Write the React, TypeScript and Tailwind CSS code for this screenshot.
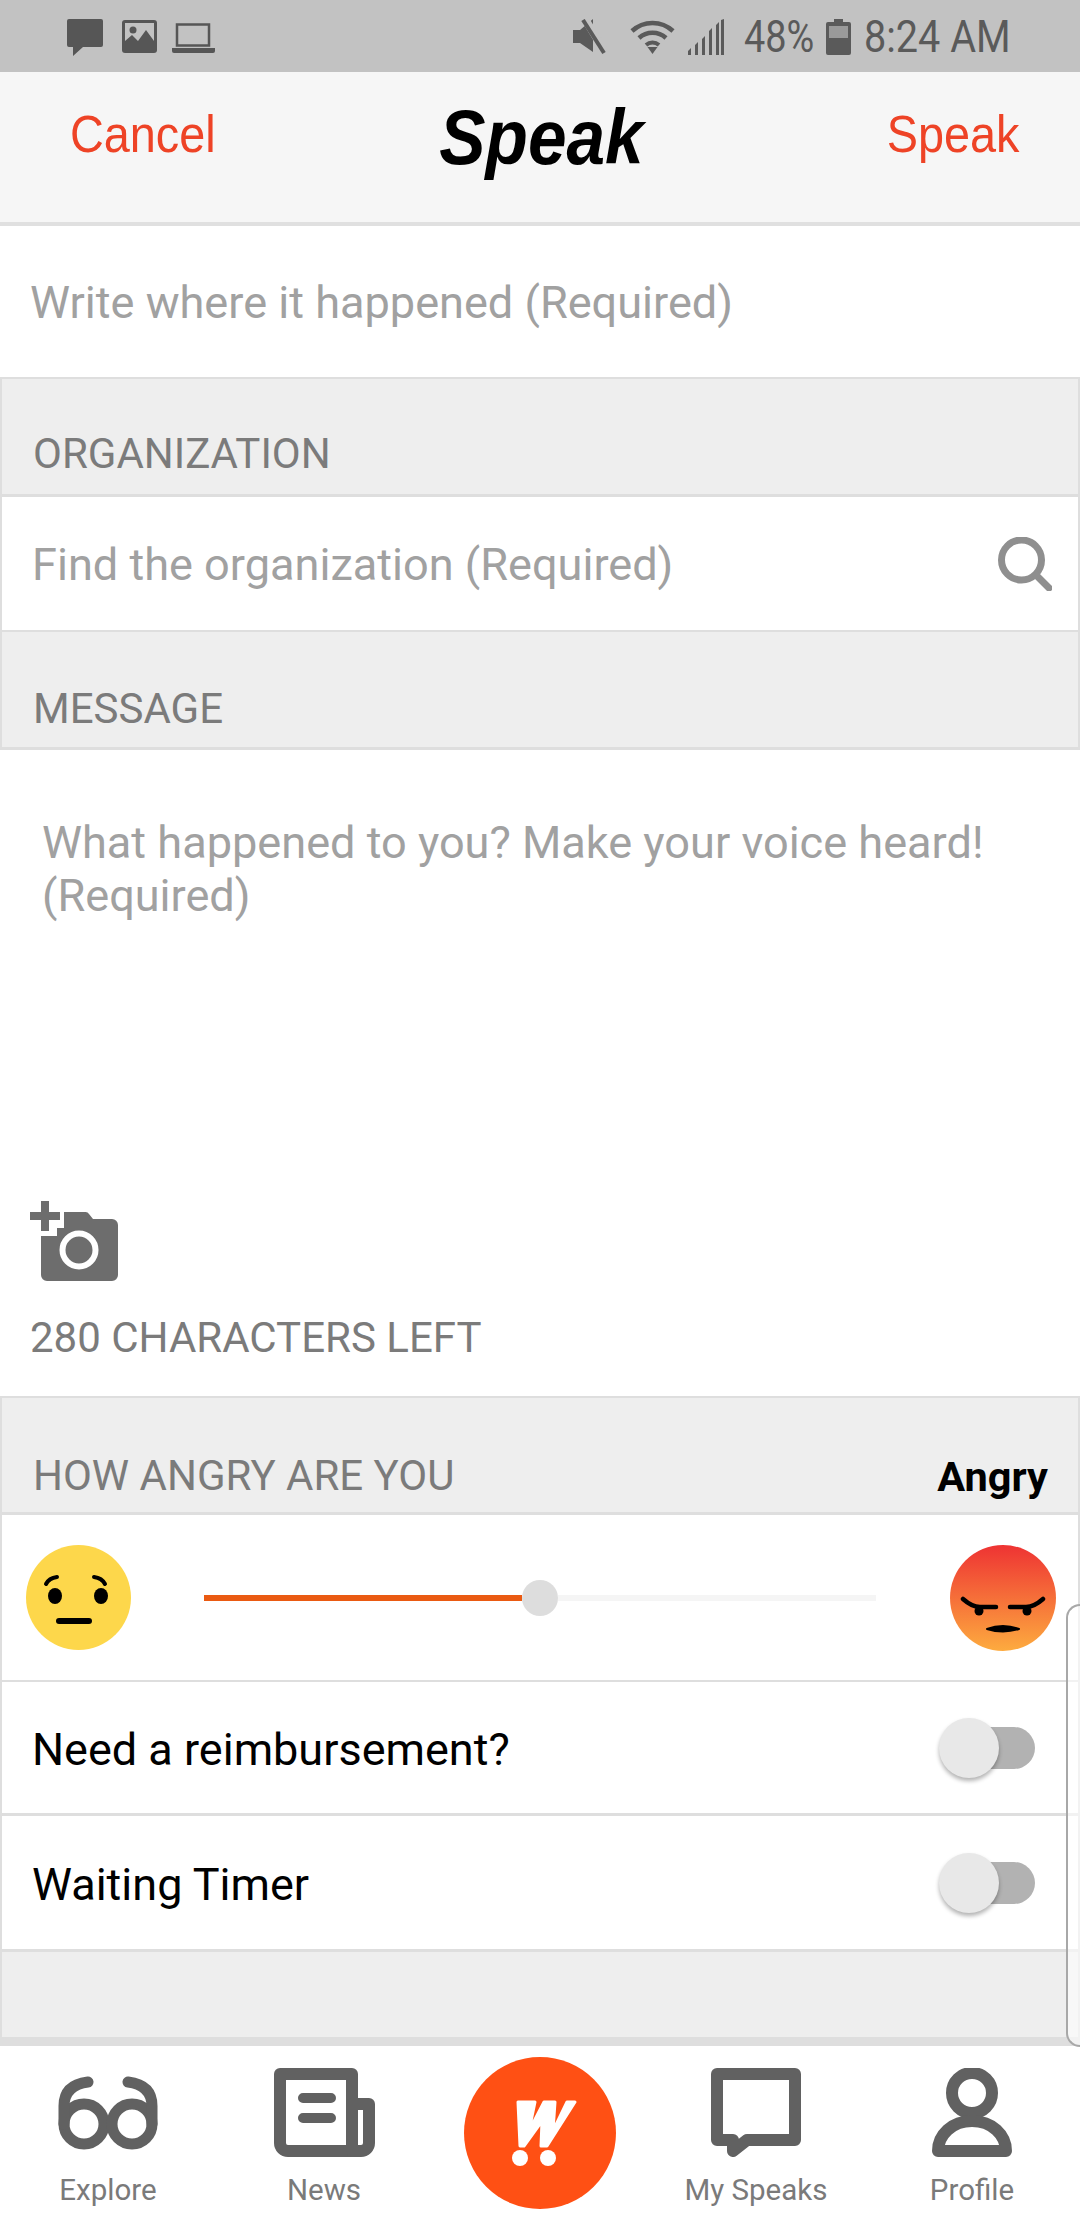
const sans = "font-['Roboto','Noto_Sans',sans-serif]";

function SectionHead({ label, right, pb }: { label: string; right?: string; pb: string }) {
  return (
    <div className={`flex h-full items-end justify-between border-x-2 border-t-2 border-b-[3px] border-[#dedede] bg-[#eeeeee] pr-[30px] pl-[31px] ${pb}`}>
      <span className="text-[42px] leading-[48px] text-[#7b7b7b]">{label}</span>
      {right && <span className="mb-[-1px] text-[41.5px] leading-[48px] font-bold text-black">{right}</span>}
    </div>
  );
}

function ToggleRow({ label, h }: { label: string; h: string }) {
  return (
    <div className={`flex items-center justify-between border-x-2 border-b-[3px] border-[#dedede] bg-white pr-[43px] pl-[30px] ${h}`}>
      <span className="pt-[4px] text-[45px] text-black">{label}</span>
      <div className="relative h-[42px] w-[96px]">
        <div className="absolute top-0 right-0 h-[42px] w-[84px] rounded-full bg-[#b2b2b2]" />
        <div className="absolute top-[-9px] left-0 h-[60px] w-[60px] rounded-full bg-[#e8e8e8] shadow-[0_3px_4px_rgba(0,0,0,0.3)]" />
      </div>
    </div>
  );
}

function StatusIcons() {
  return (
    <div className="flex items-start pt-[19px] text-[#565656]">
      <svg width="36" height="37" viewBox="0 0 36 37" className="mr-[19px]">
        <path d="M2 0h32a2 2 0 0 1 2 2v24a2 2 0 0 1-2 2H16L6 37v-9H2a2 2 0 0 1-2-2V2a2 2 0 0 1 2-2z" fill="currentColor" />
      </svg>
      <svg width="35" height="33" viewBox="0 0 35 33" className="mt-[1px] mr-[15px]">
        <rect width="35" height="33" rx="3" fill="currentColor" />
        <rect x="3" y="3" width="29" height="27" fill="#c2c2c2" />
        <path d="M3 30V21l7-6 6 6 8-11 8 11v9z" fill="currentColor" />
        <circle cx="11" cy="10" r="3.5" fill="currentColor" />
      </svg>
      <svg width="43" height="30" viewBox="0 0 43 30" className="mt-[4px]">
        <rect x="5" y="1.5" width="32" height="21" fill="none" stroke="currentColor" strokeWidth="2.5" />
        <path d="M0 25h43v3a2 2 0 0 1-2 2H2a2 2 0 0 1-2-2z" fill="currentColor" />
      </svg>
    </div>
  );
}

function StatusRight() {
  return (
    <div className="flex items-start pt-[19px] text-[#5a5a5a]">
      <svg width="34" height="36" viewBox="0 0 34 36" className="mr-[23px]">
        <path d="M0 11h7L20 0v33L7 24H0z" fill="currentColor" />
        <path d="M12 0l22 36" stroke="#c2c2c2" strokeWidth="8" />
        <path d="M10 1l21 33" stroke="currentColor" strokeWidth="4" />
      </svg>
      <svg width="45" height="35" viewBox="0 0 45 35" className="mr-[12px]">
        <path d="M2 12a30 30 0 0 1 41 0" fill="none" stroke="currentColor" strokeWidth="4.5" />
        <path d="M9 19a20 20 0 0 1 27 0" fill="none" stroke="currentColor" strokeWidth="4.5" />
        <path d="M16 26a10 10 0 0 1 13 0" fill="none" stroke="currentColor" strokeWidth="4" />
        <path d="M22.5 35l-5-7h10z" fill="currentColor" />
      </svg>
      <svg width="37" height="36" viewBox="0 0 37 36" className="mr-[20px]">
        <path d="M1 36v-4l3-3v7zM8 36V26l3-3v13zM15 36V20l3-3v19zM22 36V12l3-3v27zM29 36V6l3-3v33zM34 36V1l3-1v36z" fill="currentColor" />
      </svg>
      <span className="mt-[-2px] mr-[12px] w-[70px] origin-left scale-x-[0.86] text-[44px] leading-[40px] whitespace-nowrap">48%</span>
      <svg width="25" height="36" viewBox="0 0 25 36" className="mr-[13px]">
        <path d="M8 0h9v3h6a2 2 0 0 1 2 2v29a2 2 0 0 1-2 2H2a2 2 0 0 1-2-2V5a2 2 0 0 1 2-2h6z" fill="currentColor" />
        <rect x="3" y="7" width="19" height="12" fill="#9a9a9a" />
      </svg>
      <span className="mt-[-2px] w-[145px] origin-left scale-x-[0.9] text-[44px] leading-[40px] whitespace-nowrap">8:24 AM</span>
    </div>
  );
}

function NavItem({ label, children }: { label: string; children: React.ReactNode }) {
  return (
    <div className="flex flex-col items-center pt-[22px]">
      <div className="flex h-[89px] items-center justify-center text-[#616161]">{children}</div>
      <span className="mt-[14px] text-[29.5px] leading-[38px] text-[#7a7a7a]">{label}</span>
    </div>
  );
}

export default function App() {
  return (
    <div className={`relative h-[2220px] w-[1080px] overflow-hidden bg-white ${sans}`}>
      <div className="flex h-[72px] items-start justify-between bg-[#c2c2c2] pr-[71px] pl-[67px]">
        <StatusIcons />
        <StatusRight />
      </div>

      <div className="flex h-[154px] items-start justify-between border-b-4 border-[#e0e0e0] bg-[#f6f6f6] pt-[27px] pr-[61px] pl-[70px] font-['Liberation_Sans',sans-serif]">
        <span className="origin-left scale-x-90 text-[52px] leading-[70px] text-[#ee4326]">Cancel</span>
        <span className="mr-[20px] origin-center scale-x-90 text-[77px] leading-[76px] font-bold italic text-black">Speak</span>
        <span className="origin-right scale-x-90 text-[52px] leading-[70px] text-[#ee4326]">Speak</span>
      </div>

      <div className="flex h-[151px] items-center bg-white pt-[2px] pl-[30px]">
        <span className="text-[45.1px] text-[#a1a1a1]">Write where it happened (Required)</span>
      </div>

      <div className="h-[120px]">
        <SectionHead label="ORGANIZATION" pb="pb-[16px]" />
      </div>

      <div className="flex h-[133px] items-center justify-between border-x-2 border-[#dedede] bg-white pr-[26px] pl-[30px]">
        <span className="pt-[2px] text-[45.1px] text-[#a1a1a1]">Find the organization (Required)</span>
        <svg width="54" height="54" viewBox="0 0 54 54" fill="none" stroke="#8f8f8f" strokeLinecap="round">
          <circle cx="23.5" cy="23" r="20" strokeWidth="7" />
          <path d="M38 38l13 13" strokeWidth="7" />
        </svg>
      </div>

      <div className="h-[120px]">
        <SectionHead label="MESSAGE" pb="pb-[14px]" />
      </div>

      <div className="flex h-[646px] flex-col bg-white pt-[66px] pl-[42px]">
        <p className="w-[1010px] text-[45.1px] leading-[53px] text-[#a1a1a1]">
          What happened to you? Make your voice heard! (Required)
        </p>
        <svg width="88" height="80" viewBox="0 0 88 80" className="mt-[279px] ml-[-12px] shrink-0" fill="#6d6d6d">
          <path d="M34 11h21a4 4 0 0 1 4 2l4 5h19a6 6 0 0 1 6 6v50a6 6 0 0 1-6 6H17a6 6 0 0 1-6-6V35h16v-8h7z" />
          <path d="M11 0h8v11h11v8H19v11h-8V19H0v-8h11z" />
          <circle cx="49" cy="49" r="16.5" fill="none" stroke="#fff" strokeWidth="6" />
        </svg>
        <span className="mt-[33px] ml-[-12px] text-[42px] leading-[48px] text-[#7b7b7b]">280 CHARACTERS LEFT</span>
      </div>

      <div className="h-[119px]">
        <SectionHead label="HOW ANGRY ARE YOU" right="Angry" pb="pb-[12px]" />
      </div>

      <div className="flex h-[167px] items-center border-x-2 border-b-2 border-[#dedede] bg-white pr-[22px] pl-[24px]">
        <svg width="105" height="105" viewBox="0 0 105 105" className="shrink-0">
          <circle cx="52.5" cy="52.5" r="52.5" fill="#fdd74b" />
          <ellipse cx="29" cy="51" rx="7" ry="8" fill="#000" />
          <ellipse cx="75" cy="51" rx="7" ry="8" fill="#000" />
          <path d="M20 39q3-6 11-7M68 32q8 1 11 7" fill="none" stroke="#000" strokeWidth="4" strokeLinecap="round" />
          <path d="M33 76h30" stroke="#000" strokeWidth="6" strokeLinecap="round" />
        </svg>
        <div className="ml-[73px] flex w-[672px] shrink-0 items-center">
          <div className="h-[6px] w-[318px] bg-[#ea5a12]" />
          <div className="h-[36px] w-[36px] shrink-0 rounded-full bg-[#dddddd]" />
          <div className="h-[6px] flex-1 bg-[#f5f5f5]" />
        </div>
        <svg width="106" height="106" viewBox="0 0 106 106" className="ml-auto shrink-0">
          <defs>
            <linearGradient id="angry" x1="0" y1="0" x2="0" y2="1">
              <stop offset="0" stopColor="#ee3333" />
              <stop offset="1" stopColor="#fdab3f" />
            </linearGradient>
          </defs>
          <circle cx="53" cy="53" r="53" fill="url(#angry)" />
          <path d="M13 54Q22 62 30 62L46 62M93 54Q84 62 76 62L60 62" fill="none" stroke="#000" strokeWidth="4.5" strokeLinecap="round" />
          <circle cx="29" cy="66" r="4.5" fill="#000" />
          <circle cx="77" cy="66" r="4.5" fill="#000" />
          <path d="M37 84Q53 78 69 84Q53 89 37 84z" fill="#000" stroke="#000" strokeWidth="2" strokeLinejoin="round" />
        </svg>
      </div>

      <ToggleRow label="Need a reimbursement?" h="h-[134px]" />
      <ToggleRow label="Waiting Timer" h="h-[136px]" />

      <div className="h-[94px] border-x-2 border-b-[9px] border-[#dedede] bg-[#eeeeee]" />

      <div className="grid h-[174px] grid-cols-5 bg-white">
        <NavItem label="Explore">
          <svg width="100" height="74" viewBox="0 0 100 74" fill="none" stroke="currentColor" strokeWidth="11" strokeLinecap="round">
            <circle cx="26" cy="48" r="20" />
            <circle cx="74" cy="48" r="20" />
            <path d="M6 48V30Q6 9 30 6M94 48V30Q94 9 70 6" />
          </svg>
        </NavItem>
        <NavItem label="News">
          <svg width="101" height="89" viewBox="0 0 101 89" fill="none" stroke="currentColor" strokeWidth="12" strokeLinejoin="round">
            <path d="M6 6h72v77H14a8 8 0 0 1-8-8z" />
            <path d="M78 36h17v39a8 8 0 0 1-8 8H78z" />
            <path d="M29 30h28M29 50h28" strokeWidth="10" strokeLinecap="round" />
          </svg>
        </NavItem>
        <div className="flex items-start justify-center pt-[11px]">
          <svg width="152" height="152" viewBox="0 0 152 152">
            <circle cx="76" cy="76" r="76" fill="#ff5014" />
            <path
              d="M54 45H71L65 74 80 45H91L89 74 103 45H111L83 89H77L78 64 60 89H56z"
              fill="#fff"
              stroke="#fff"
              strokeWidth="3"
              strokeLinejoin="round"
            />
            <circle cx="56" cy="101" r="8" fill="#fff" />
            <circle cx="84" cy="101" r="8" fill="#fff" />
          </svg>
        </div>
        <NavItem label="My Speaks">
          <svg width="90" height="89" viewBox="0 0 90 89" fill="none" stroke="currentColor" strokeWidth="12" strokeLinejoin="round">
            <path d="M6 6h78v66H36L22 83V72H6z" />
          </svg>
        </NavItem>
        <NavItem label="Profile">
          <svg width="80" height="89" viewBox="0 0 80 89" fill="none" stroke="currentColor" strokeWidth="12">
            <circle cx="40" cy="25" r="20" />
            <path d="M6 83c0-16 14-30 34-30s34 14 34 30z" strokeLinejoin="round" />
          </svg>
        </NavItem>
      </div>

      <div className="absolute top-[1604px] right-0 h-[443px] w-[14px] rounded-l-[14px] border-y-2 border-l-2 border-[#a8a8a8] bg-white/60" />
    </div>
  );
}
